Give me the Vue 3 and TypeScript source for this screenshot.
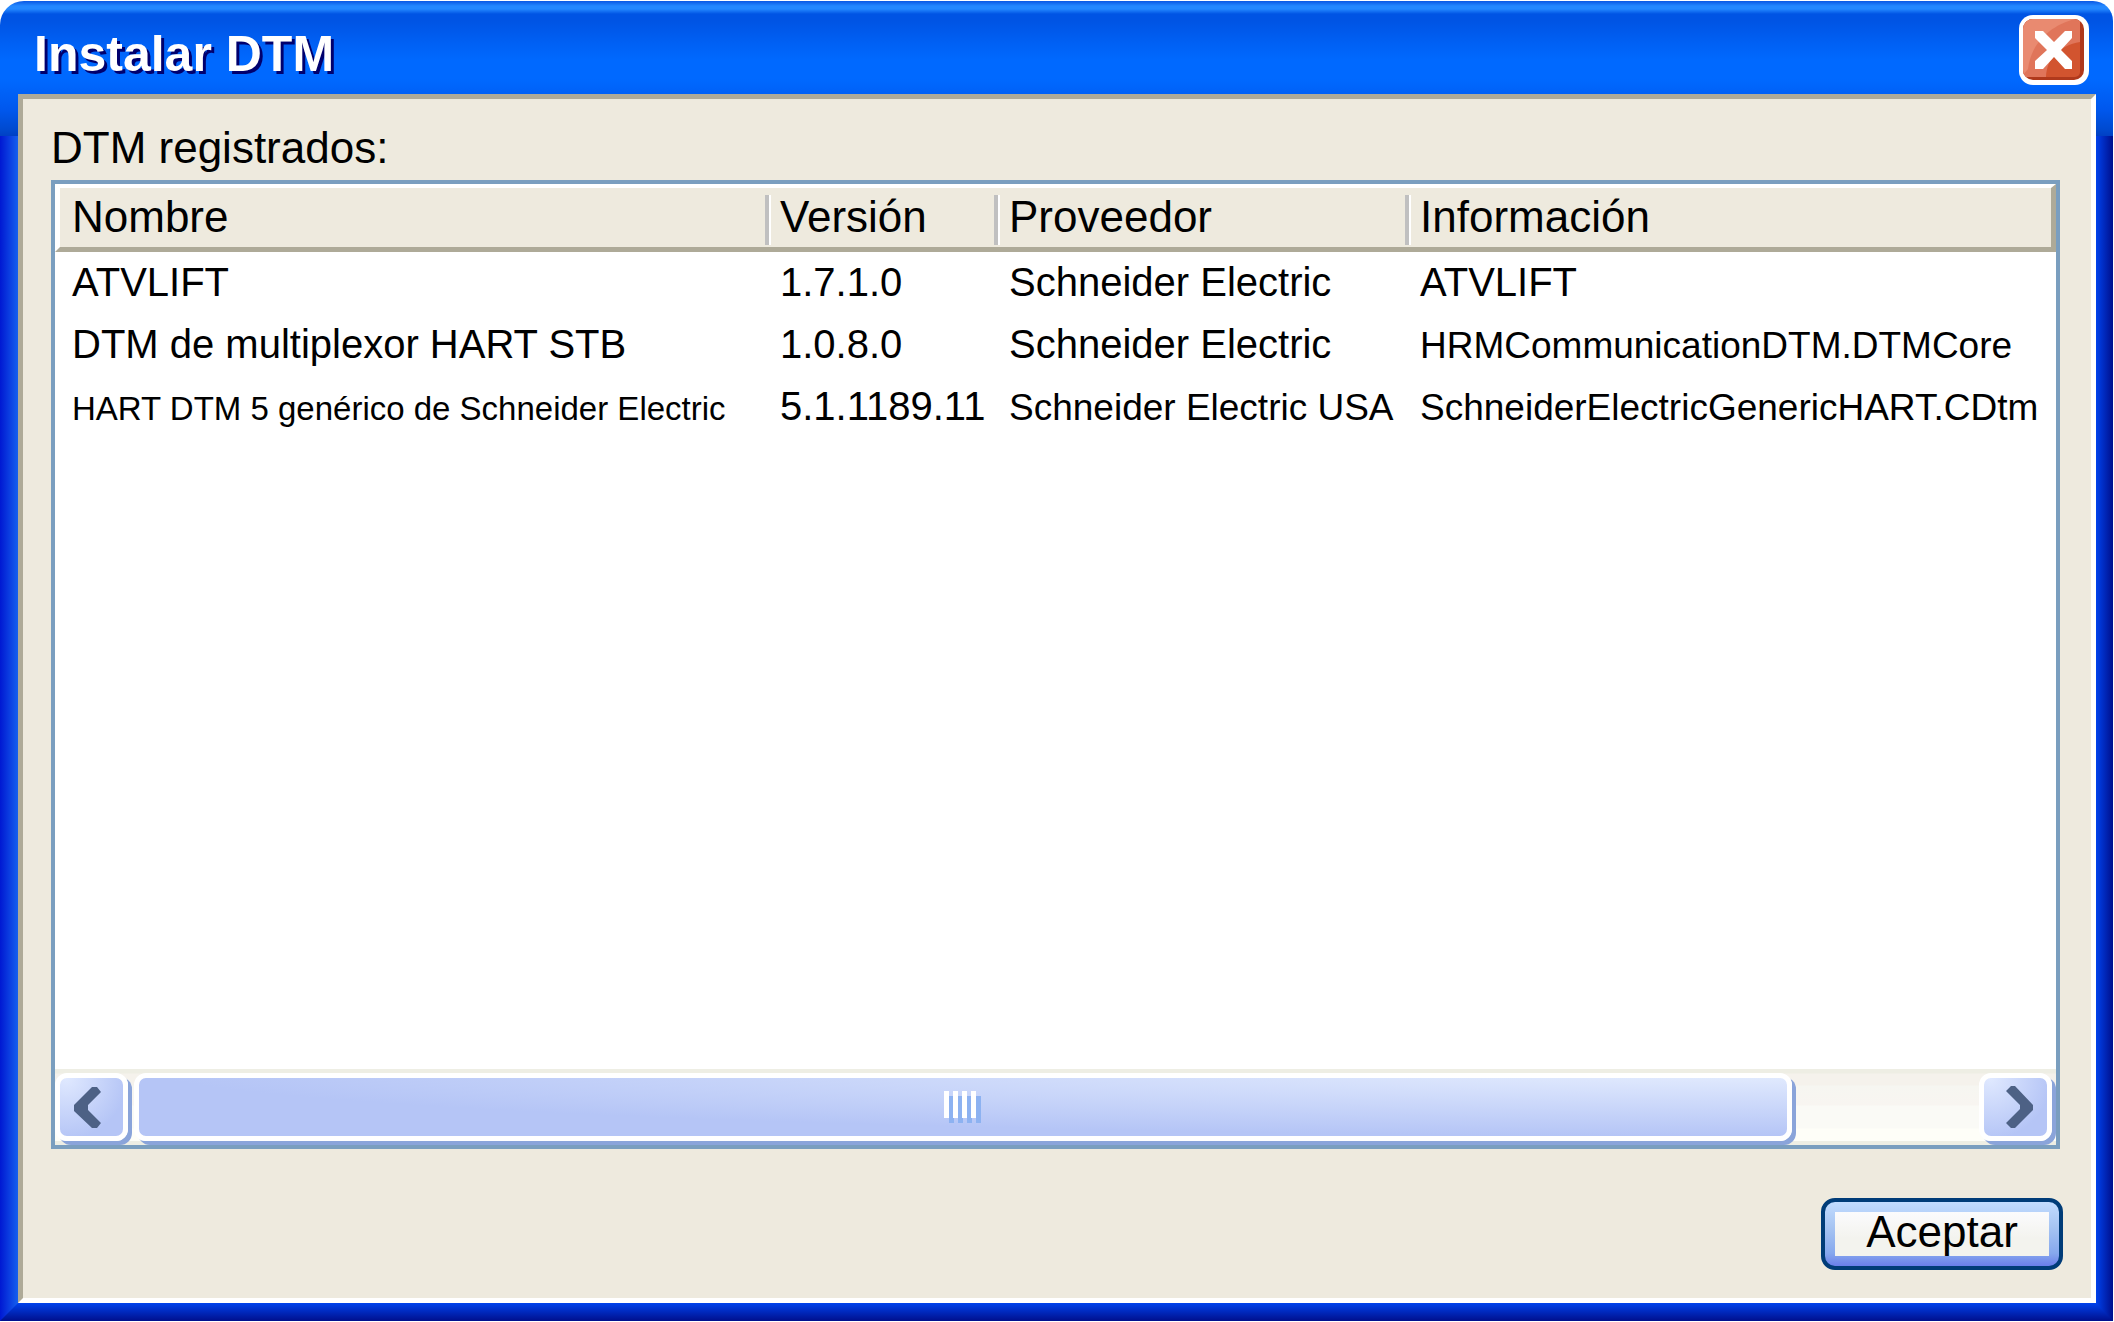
<script setup lang="ts">
import { ref } from 'vue'

type Fit = 'wide' | 'medium' | 'tight'

interface Cell {
  text: string
  fit: Fit
}

const title = ref('Instalar DTM')

const columns: string[] = ['Nombre', 'Versión', 'Proveedor', 'Información']

const rows: Cell[][] = [
  [
    { text: 'ATVLIFT', fit: 'wide' },
    { text: '1.7.1.0', fit: 'wide' },
    { text: 'Schneider Electric', fit: 'wide' },
    { text: 'ATVLIFT', fit: 'wide' },
  ],
  [
    { text: 'DTM de multiplexor HART STB', fit: 'wide' },
    { text: '1.0.8.0', fit: 'wide' },
    { text: 'Schneider Electric', fit: 'wide' },
    { text: 'HRMCommunicationDTM.DTMCore', fit: 'medium' },
  ],
  [
    { text: 'HART DTM 5 genérico de Schneider Electric', fit: 'tight' },
    { text: '5.1.1189.11', fit: 'wide' },
    { text: 'Schneider Electric USA', fit: 'medium' },
    { text: 'SchneiderElectricGenericHART.CDtm', fit: 'medium' },
  ],
]
</script>

<template>
  <main class="window">
    <header class="titlebar">
      <h1 class="title">{{ title }}</h1>
      <button class="close" type="button" aria-label="Cerrar">
        <svg viewBox="0 0 70 70" width="70" height="70" aria-hidden="true">
          <defs>
            <clipPath id="face"><rect x="4" y="4" width="61" height="61" rx="10" /></clipPath>
          </defs>
          <rect width="70" height="70" rx="14" fill="#fff" />
          <g clip-path="url(#face)">
            <rect x="4" y="4" width="62" height="62" fill="#b0391c" />
            <rect x="4" y="4" width="57" height="58" rx="5" fill="#d2542f" />
            <path d="M4 4H61V27C40 31 28 43 27 62H4Z" fill="#e0755a" />
            <path d="M4 4H56C32 10 12 28 9 54L4 60Z" fill="#e98a70" />
          </g>
          <path d="M16 16H24L35 27L46 16H53V23L42 35L53 46V54H46L35 42L24 54H16V46L28 35L16 23Z" fill="#fff" />
        </svg>
      </button>
    </header>

    <section class="panel">
      <h2 id="list-label" class="label">DTM registrados:</h2>
      <div class="list">
        <table class="table" aria-labelledby="list-label">
          <colgroup>
            <col class="col-name" />
            <col class="col-version" />
            <col class="col-vendor" />
            <col />
          </colgroup>
          <thead>
            <tr>
              <th v-for="c in columns" :key="c" scope="col">{{ c }}</th>
            </tr>
          </thead>
          <tbody>
            <tr v-for="(row, r) in rows" :key="r">
              <td v-for="(cell, i) in row" :key="i" :class="cell.fit">{{ cell.text }}</td>
            </tr>
          </tbody>
        </table>

        <div class="scroll">
          <button class="arrow" type="button" aria-label="Desplazar a la izquierda">
            <svg viewBox="0 0 64 59" width="64" height="59" aria-hidden="true">
              <path d="M32 9H37L41 14L28 27V32L41 45L37 50H32L14 33V27Z" fill="#4d6185" />
            </svg>
          </button>
          <div class="track">
            <div class="thumb">
              <svg viewBox="0 0 38 33" width="38" height="33" aria-hidden="true">
                <g v-for="n in 4" :key="n">
                  <rect :x="n * 9 - 4" y="5" width="5" height="27" fill="#8db2f1" />
                  <rect :x="n * 9 - 9" y="0" width="5" height="27" fill="#fff" />
                </g>
              </svg>
            </div>
          </div>
          <button class="arrow" type="button" aria-label="Desplazar a la derecha">
            <svg viewBox="0 0 64 59" width="64" height="59" aria-hidden="true">
              <path d="M31 8H27L22 13L36 27V31L22 45L27 50H31L49 32V27Z" fill="#4d6185" />
            </svg>
          </button>
        </div>
      </div>

      <footer class="actions">
        <button class="ok" type="button"><span>Aceptar</span></button>
      </footer>
    </section>
    <div class="bottom-edge"></div>
  </main>
</template>

<style>
body {
  background: #fff;
}
</style>

<style scoped>
* {
  box-sizing: border-box;
}
button {
  appearance: none;
  margin: 0;
  padding: 0;
  border: 0;
  background: none;
  font: inherit;
  color: inherit;
}
svg {
  display: block;
}
.window {
  display: flex;
  flex-direction: column;
  min-height: calc(100vh - 2px);
  margin: 1px 1px 1px 0;
  border-radius: 24px 20px 0 0;
  color: #000;
  font: 44px/50px "Liberation Sans", Arial, sans-serif;
  background:
    linear-gradient(#0a58e4 0, #2488ff 5px, #2488ff 8px, #0054e4 13px, #0054e4 20px, #0060f4 42px, #0069ff 60px, #0069ff 78px, #0058ee 108px, #004ad0 128px, #0040c4 135px) 0 0 / 100% 135px no-repeat,
    linear-gradient(90deg, #0018d2, #1560ee) 0 0 / 18px 100% no-repeat,
    linear-gradient(90deg, #0042ec, #000f8c) 100% 0 / 17px 100% no-repeat;
}
.titlebar {
  display: flex;
  align-items: flex-start;
  justify-content: space-between;
  height: 93px;
  padding: 14px 24px 0 34px;
}
.title {
  margin: 11px 0 0;
  color: #fff;
  font-size: 50px;
  line-height: 56px;
  font-weight: bold;
  text-shadow: 3px 3px 0 #00006e;
}
.close {
  width: 70px;
  height: 70px;
}
.panel {
  flex: 1;
  display: flex;
  flex-direction: column;
  margin: 0 17px 0 18px;
  padding: 24px 28px 28px;
  border: 5px solid;
  border-color: #aeaa98 #fff #fff #aeaa98;
  background: #eeeade;
}
.label {
  margin: 0 0 7px;
  font-size: 44px;
  font-weight: normal;
}
.list {
  flex: 1;
  display: flex;
  flex-direction: column;
  justify-content: space-between;
  margin-right: 3px;
  border: 4px solid #7a9ebf;
  background: #fff;
}
.table {
  width: 100%;
  table-layout: fixed;
  border-collapse: separate;
  border-spacing: 0;
}
.col-name {
  width: 710px;
}
.col-version {
  width: 229px;
}
.col-vendor {
  width: 411px;
}
th,
td {
  text-align: left;
  font-weight: normal;
  white-space: nowrap;
}
th {
  height: 68px;
  padding: 4px 0 5px 15px;
  border-top: 4px solid #fff;
  border-bottom: 5px solid #aeaa98;
  background:
    linear-gradient(#c0c0c0, #c0c0c0) 0 7px / 4px 50px no-repeat,
    linear-gradient(#fff, #fff) 4px 7px / 2px 50px no-repeat,
    #eeeade;
}
th:first-child {
  padding-left: 12px;
  border-left: 5px solid #fff;
  background: #eeeade;
}
th:last-child {
  border-right: 5px solid #aeaa98;
}
td {
  height: 62px;
  padding: 2px 0 0 15px;
  line-height: 56px;
  vertical-align: baseline;
}
td:first-child {
  padding-left: 17px;
}
.wide {
  font-size: 40px;
}
.medium {
  font-size: 37px;
}
.tight {
  font-size: 33px;
}
.scroll {
  display: flex;
  height: 76px;
  padding: 4px 4px 4px 0;
  background: linear-gradient(#eeeee4 0, #eeeee4 4px, #f5f2ec 5px, #f5f2ec 16px, #f6f6f1 17px, #f8f5f1 36px, #fafaf6 37px, #fafaf6 59px, #fefef8 60px, #fefef8 72px, #eeeee4 72px);
}
.arrow,
.thumb {
  border: 5px solid #fff;
  border-radius: 12px;
  box-shadow: 4px 4px 0 #8aa4da;
}
.arrow {
  flex: none;
  width: 73px;
  height: 68px;
  background: radial-gradient(circle at 10% 0%, #e0e9ff, #b5c5f6 75%);
}
.track {
  flex: 1;
  padding: 0 187px 0 6px;
}
.thumb {
  display: flex;
  justify-content: center;
  height: 68px;
  padding-top: 13px;
  background: radial-gradient(100% 120% at 100% -20%, #e8f0ff, #b5c5f6);
}
.actions {
  display: flex;
  justify-content: flex-end;
  margin-top: 49px;
}
.ok {
  width: 242px;
  height: 72px;
  padding: 10px;
  border: 4px solid #003c78;
  border-radius: 14px;
  background: linear-gradient(#c2dcff, #a6c4f2 40%, #86a8ee 80%, #6a7eea);
}
.ok span {
  display: block;
  height: 44px;
  line-height: 40px;
  background: linear-gradient(#fbfbfd, #f3f3ee 60%);
}
.bottom-edge {
  height: 18px;
  background: linear-gradient(#0042ec, #000f8c);
  clip-path: polygon(18px 0, calc(100% - 17px) 0, 100% 100%, 0 100%);
}
</style>
